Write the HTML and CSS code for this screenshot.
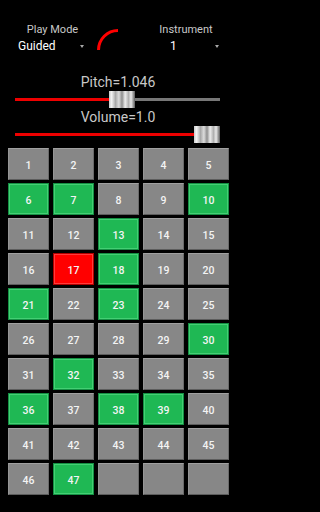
FILE: index.html
```html
<!DOCTYPE html>
<html>
<head>
<meta charset="utf-8">
<link rel="stylesheet" href="styles.css">
</head>
<body>
<div class="app">
  <div class="header">
    <div class="spinner left">
      <div class="label">Play Mode</div>
      <div class="value"><span class="val-text">Guided</span><span class="caret"></span></div>
    </div>
    <svg class="arc" width="40" height="40" viewBox="0 0 40 40">
      <path d="M2.5 22 A19.5 19.5 0 0 1 22 2.5" fill="none" stroke="#ff0000" stroke-width="3"/>
    </svg>
    <div class="spinner right">
      <div class="label">Instrument</div>
      <div class="value"><span class="val-text">1</span><span class="caret"></span></div>
    </div>
  </div>
  <div class="slabel">Pitch=1.046</div>
  <div class="slider">
    <div class="fill" style="width:94px"></div>
    <div class="thumb"></div>
    <div class="rest"></div>
  </div>
  <div class="slabel">Volume=1.0</div>
  <div class="slider s2">
    <div class="fill" style="width:179px"></div>
    <div class="thumb"></div>
    <div class="rest"></div>
  </div>
  <div class="grid">
    <div class="cell">1</div><div class="cell">2</div><div class="cell">3</div><div class="cell">4</div><div class="cell">5</div>
    <div class="cell on">6</div><div class="cell on">7</div><div class="cell">8</div><div class="cell">9</div><div class="cell on">10</div>
    <div class="cell">11</div><div class="cell">12</div><div class="cell on">13</div><div class="cell">14</div><div class="cell">15</div>
    <div class="cell">16</div><div class="cell hot">17</div><div class="cell on">18</div><div class="cell">19</div><div class="cell">20</div>
    <div class="cell on">21</div><div class="cell">22</div><div class="cell on">23</div><div class="cell">24</div><div class="cell">25</div>
    <div class="cell">26</div><div class="cell">27</div><div class="cell">28</div><div class="cell">29</div><div class="cell on">30</div>
    <div class="cell">31</div><div class="cell on">32</div><div class="cell">33</div><div class="cell">34</div><div class="cell">35</div>
    <div class="cell on">36</div><div class="cell">37</div><div class="cell on">38</div><div class="cell on">39</div><div class="cell">40</div>
    <div class="cell">41</div><div class="cell">42</div><div class="cell">43</div><div class="cell">44</div><div class="cell">45</div>
    <div class="cell">46</div><div class="cell on">47</div><div class="cell"></div><div class="cell"></div><div class="cell"></div>
  </div>
</div>
</body>
</html>
```
FILE: styles.css
```css
html, body {
  margin: 0;
  padding: 0;
  background: #000;
}
body {
  font-family: Roboto, "Liberation Sans", sans-serif;
  color: #fff;
  width: 236px;
  height: 512px;
  overflow: hidden;
}
.header {
  display: flex;
  align-items: flex-start;
  padding-top: 23px;
  height: 51px;
}
.spinner {
  display: flex;
  flex-direction: column;
}
.spinner.left {
  margin-left: 15px;
  width: 75px;
}
.spinner.right {
  margin-left: 14px;
  width: 72px;
}
.label {
  font-size: 11px;
  line-height: 13px;
  color: #c8c8c8;
  text-align: center;
}
.value {
  display: flex;
  align-items: center;
  justify-content: space-between;
  margin-top: 3px;
  height: 14px;
  font-size: 12px;
  line-height: 14px;
  color: #fff;
}
.left .value {
  padding-left: 3px;
  padding-right: 6px;
}
.right .value {
  padding-left: 20px;
  padding-right: 3px;
}
.caret {
  width: 0;
  height: 0;
  border-left: 2.5px solid transparent;
  border-right: 2.5px solid transparent;
  border-top: 3px solid #a8a8a8;
  margin-top: 1px;
}
.arc {
  margin-left: 6px;
  margin-top: 5px;
  flex: none;
}
.slabel {
  font-size: 14px;
  line-height: 16px;
  color: #c8c8c8;
  text-align: center;
  padding-right: 0;
}
.slider {
  display: flex;
  align-items: center;
  height: 19px;
  margin-left: 15px;
  width: 205px;
}
.slider.s2 {
  height: 18px;
  margin-top: 0;
}
.fill {
  height: 3px;
  background: #ee0000;
  flex: none;
}
.rest {
  height: 3px;
  background: #777;
  flex: 1;
}
.thumb {
  width: 26px;
  height: 17px;
  flex: none;
  background: linear-gradient(to right, #c8c8c8 0%, #f2f2f2 10%, #a8a8a8 25%, #dcdcdc 38%, #8e8e8e 50%, #ececec 62%, #b0b0b0 75%, #e8e8e8 85%, #5a5a5a 100%);
}
.grid {
  display: grid;
  grid-template-columns: repeat(5, 41px);
  grid-auto-rows: 32px;
  column-gap: 4px;
  row-gap: 3px;
  padding-left: 8px;
  margin-top: 5px;
}
.cell {
  box-sizing: border-box;
  background: #878787;
  border-top: 1px solid #a0a0a0;
  border-left: 1px solid #959595;
  border-right: 1px solid #6a6a6a;
  border-bottom: 1px solid #5c5c5c;
  display: flex;
  align-items: center;
  justify-content: center;
  font-size: 10.5px;
  font-weight: 500;
  color: #f4f4f4;
  padding-top: 2px;
}
.cell.on {
  background: #1fb854;
  border-color: #159043;
  box-shadow: inset 0 0 0 1px #44cf74;
}
.cell.hot {
  background: #ff0000;
  border-color: #b00000;
  box-shadow: inset 0 0 0 1px #ff3a3a;
}
```
